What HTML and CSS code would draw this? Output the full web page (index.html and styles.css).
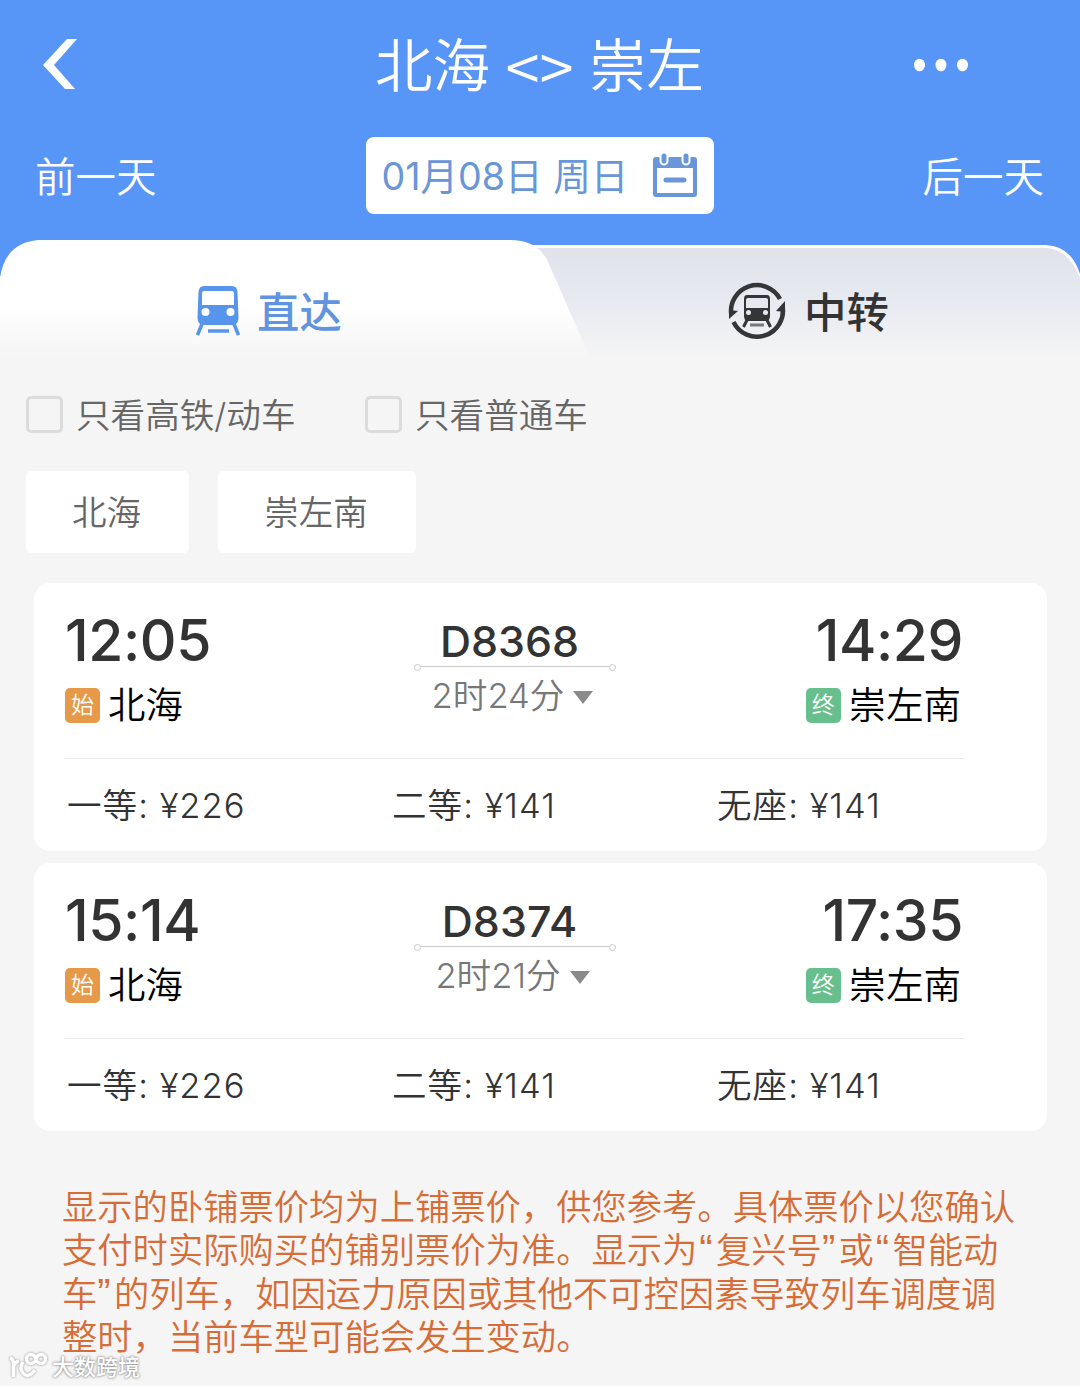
FILE: index.html
```html
<!DOCTYPE html>
<html lang="zh-CN">
<head>
    <meta charset="UTF-8">
    <meta name="viewport" content="width=device-width, initial-scale=1.0">
    <title>北海 - 崇左 车票查询</title>
    <link rel="stylesheet" href="styles.css">
</head>
<body>
    <header class="header">
        <div class="title-bar">
            <svg class="back-icon" viewBox="0 0 34 52"><path d="M24 0H34L11 26L32 50H22L0 26Z" fill="#fff"/></svg>
            <h1><span>北海</span><span class="arrows">&lt;&gt;</span><span>崇左</span></h1>
            <svg class="more-icon" viewBox="0 0 54 14" fill="#fff"><ellipse cx="5.500" cy="7" rx="5.500" ry="6.300"/><ellipse cx="27" cy="7" rx="5.500" ry="6.300"/><ellipse cx="48.500" cy="7" rx="5.500" ry="6.300"/></svg>
        </div>
        <div class="date-bar">
            <span class="day-link">前一天</span>
            <div class="date-picker">
                <span class="date-text">01月08日 周日</span>
                <svg class="calendar-icon" viewBox="0 0 44 46">
                    <path d="M3 4H41Q44 4 44 7V41Q44 44 41 44H3Q0 44 0 41V7Q0 4 3 4Z" fill="#6896d8"/>
                    <path d="M4 15H40V40H4Z" fill="#fff"/>
                    <g stroke="#fff" stroke-width="9" stroke-linecap="round"><path d="M11 3V8M33 3V8"/></g>
                    <g stroke="#6896d8" stroke-width="5" stroke-linecap="round"><path d="M11 3V8M33 3V8"/><path d="M13 27H31"/></g>
                </svg>
            </div>
            <span class="day-link">后一天</span>
        </div>
    </header>

    <nav class="tabs">
        <svg class="tabs-bg" viewBox="0 0 1080 130">
            <defs>
                <linearGradient id="activeFade" x1="0" y1="0" x2="0" y2="1">
                    <stop offset="0.5" stop-color="#fff"/>
                    <stop offset="0.9" stop-color="#f5f5f5"/>
                </linearGradient>
                <linearGradient id="idleFade" x1="0" y1="0" x2="0" y2="1">
                    <stop offset="0" stop-color="#e0e3ea"/>
                    <stop offset="0.45" stop-color="#e7eaf1"/>
                    <stop offset="0.9" stop-color="#f5f5f5"/>
                </linearGradient>
            </defs>
            <path d="M0 0H1080V36H0Z" fill="#5795f6"/>
            <path d="M500 5H1046Q1071 6 1080 34V130H500Z" fill="#fff"/>
            <path d="M500 8H1046Q1069 9 1080 38V130H500Z" fill="url(#idleFade)"/>
            <path d="M0 38Q5 3 38 0H510Q538 0 548 22L592 122V130H0Z" fill="url(#activeFade)"/>
        </svg>
        <div class="tab active">
            <svg class="train-icon" viewBox="0 0 44 50">
                <path d="M8 0H36Q41 0 41.500 6L42.500 32Q42 39 37 39H7Q2 39 1.500 32L2.500 6Q3 0 8 0Z" fill="#5795ec"/>
                <path d="M8 5H36Q38 5 38 7V19H6V7Q6 5 8 5Z" fill="#fff"/>
                <circle cx="9.500" cy="26" r="4" fill="#fff"/><circle cx="34.500" cy="26" r="4" fill="#fff"/>
                <path d="M6 38L1.500 49M38 38L42.500 49M12 45H33" stroke="#5795ec" stroke-width="3.500"/>
            </svg>
            <span>直达</span>
        </div>
        <div class="tab">
            <svg class="transfer-icon" viewBox="0 0 58 58">
                <g fill="none" stroke="#333537" stroke-width="4.500"><path d="M2.300 33A26 26 0 0 1 51 17M4.500 40A26 26 0 0 0 53.500 24"/></g>
                <path d="M0 37V28L9 29ZM56 19V30L47 29Z" fill="#333537"/>
                <path d="M18 13H38Q41 13 41 17V34Q41 39 37 39H19Q15 39 15 34V17Q15 13 18 13Z" fill="#333537"/>
                <path d="M19 16H37Q39 16 39 18V26H17V18Q17 16 19 16Z" fill="#e5e8ee"/>
                <circle cx="19.500" cy="30.500" r="2.500" fill="#e5e8ee"/><circle cx="36.500" cy="30.500" r="2.500" fill="#e5e8ee"/>
                <path d="M18 38L14.500 45M38 38L41.500 45" stroke="#333537" stroke-width="3"/><path d="M21 43H35" stroke="#777" stroke-width="3"/>
            </svg>
            <span>中转</span>
        </div>
    </nav>

    <main>
        <div class="filters">
            <label class="filter"><span class="checkbox"></span><span class="filter-text">只看高铁/动车</span></label>
            <label class="filter"><span class="checkbox"></span><span class="filter-text">只看普通车</span></label>
        </div>
        <div class="chips">
            <div class="chip">北海</div>
            <div class="chip">崇左南</div>
        </div>

        <div class="train-list">
            <section class="card">
                <div class="route">
                    <div class="stop">
                        <div class="time">12:05</div>
                        <div class="station"><span class="badge start">始</span>北海</div>
                    </div>
                    <div class="train">
                        <div class="train-no">D8368</div>
                        <div class="line"></div>
                        <div class="duration">2时24分<i class="caret"></i></div>
                    </div>
                    <div class="stop arrive">
                        <div class="time">14:29</div>
                        <div class="station"><span class="badge end">终</span>崇左南</div>
                    </div>
                </div>
                <div class="prices">
                    <span>一等: ¥226</span>
                    <span>二等: ¥141</span>
                    <span>无座: ¥141</span>
                </div>
            </section>
            <section class="card">
                <div class="route">
                    <div class="stop">
                        <div class="time">15:14</div>
                        <div class="station"><span class="badge start">始</span>北海</div>
                    </div>
                    <div class="train">
                        <div class="train-no">D8374</div>
                        <div class="line"></div>
                        <div class="duration">2时21分<i class="caret"></i></div>
                    </div>
                    <div class="stop arrive">
                        <div class="time">17:35</div>
                        <div class="station"><span class="badge end">终</span>崇左南</div>
                    </div>
                </div>
                <div class="prices">
                    <span>一等: ¥226</span>
                    <span>二等: ¥141</span>
                    <span>无座: ¥141</span>
                </div>
            </section>
        </div>

        <p class="notice">显示的卧铺票价均为上铺票价，供您参考。具体票价以您确认<br>支付时实际购买的铺别票价为准。显示为<q>复兴号</q>或<q>智能动<br>车</q>的列车，如因运力原因或其他不可控因素导致列车调度调<br>整时，当前车型可能会发生变动。</p>
    </main>

    <div class="watermark">
        <svg viewBox="0 0 40 28" fill="none" stroke="#fff" stroke-width="3.500">
            <path d="M1 5Q4.500 6 4.500 11V24M4.500 15Q5 9 10 8M14 9Q10 15 14 20Q19 26 26 17"/>
            <circle cx="22" cy="6" r="4.500"/><circle cx="32" cy="6" r="4.500"/>
        </svg>
        <span>大数跨境</span>
    </div>
</body>
</html>
```
FILE: styles.css
```css
* {
    box-sizing: border-box;
}
body {
    margin: 0;
    width: 1080px;
    height: 1386px;
    position: relative;
    overflow: hidden;
    background: #f5f5f5;
    color: #333;
    font-family: Inter, "Noto Sans CJK SC", sans-serif;
    font-size: 34.6px;
    font-weight: 350;
    white-space: nowrap;
}
svg {
    display: block;
    flex: none;
}

/* header */
.header {
    height: 240px;
    background: #5795f6;
    color: #fff;
}
.title-bar {
    height: 130px;
    padding: 0 112px 0 43px;
    display: grid;
    grid-template-columns: 290px auto 1fr;
    align-items: center;
}
.back-icon {
    width: 34px;
    height: 52px;
}
h1 {
    margin: 2px 0 0 42px;
    display: flex;
    gap: 14px;
    font-size: 57.5px;
    font-weight: 350;
    line-height: 80px;
}
.arrows {
    width: 71px;
    font-family: "Noto Sans CJK SC", sans-serif;
    font-size: 62px;
    font-weight: 350;
    line-height: 76px;
    text-align: center;
}
.more-icon {
    width: 54px;
    height: 14px;
    justify-self: end;
}
.date-bar {
    padding: 7px 36px 0 35px;
    display: flex;
    align-items: center;
    justify-content: space-between;
}
.day-link {
    padding-top: 4px;
    font-size: 40.5px;
    line-height: 73px;
}
.date-picker {
    width: 348px;
    height: 77px;
    padding: 0 17px 0 16px;
    display: flex;
    align-items: center;
    justify-content: space-between;
    background: #fff;
    border-radius: 8px;
    color: #6896d8;
}
.date-text {
    padding-bottom: 5px;
    font-size: 37.6px;
    font-weight: 400;
}
.calendar-icon {
    width: 44px;
    height: 46px;
}

/* tabs */
.tabs {
    position: relative;
    height: 130px;
    display: grid;
    grid-template-columns: 1fr 1fr;
}
.tabs-bg {
    position: absolute;
    inset: 0;
    width: 1080px;
    height: 130px;
}
.tab {
    position: relative;
    height: 142px;
    padding-right: 2px;
    display: flex;
    align-items: center;
    justify-content: center;
    gap: 17px;
    font-size: 42.4px;
    font-weight: 500;
}
.tab span {
    padding-bottom: 4px;
}
.tab.active {
    color: #6093e0;
}
.train-icon {
    width: 44px;
    height: 50px;
}
.transfer-icon {
    width: 58px;
    height: 58px;
    overflow: visible;
}

/* filters */
.filters {
    height: 88px;
    padding-left: 26px;
    display: grid;
    grid-template-columns: 339px 1fr;
    align-items: center;
    color: #666;
}
.filter {
    display: flex;
    align-items: center;
    gap: 13px;
}
.filter-text {
    padding-bottom: 2px;
}
.checkbox {
    width: 37px;
    height: 37px;
    border: 3px solid #dcdcdc;
    border-radius: 5px;
}
.chips {
    margin-top: 13px;
    padding-left: 26px;
    display: flex;
    gap: 29px;
}
.chip {
    height: 82px;
    padding: 0 48px 0 46px;
    background: #fff;
    border-radius: 5px;
    line-height: 83px;
    color: #666;
}

/* cards */
.train-list {
    margin: 30px 33px 0 34px;
    display: grid;
    gap: 12px;
}
.card {
    height: 268px;
    padding: 27px 83px 0 31px;
    background: #fff;
    border-radius: 16px;
}
.route {
    height: 149px;
    display: grid;
    grid-template-columns: 1fr 202px 1fr;
    border-bottom: 1px solid #ececec;
}
.time {
    font-size: 57px;
    font-weight: 500;
    line-height: 62px;
    letter-spacing: -0.4px;
}
.station {
    margin-top: 5px;
    display: flex;
    align-items: center;
    gap: 8px;
    font-size: 37.4px;
    line-height: 58px;
    color: #000;
}
.badge {
    width: 35px;
    height: 35px;
    margin-top: -2px;
    border-radius: 5px;
    color: #fff;
    font-size: 23px;
    line-height: 34px;
    text-align: center;
}
.badge.start {
    background: #e69a49;
}
.badge.end {
    background: #66bf8c;
}
.arrive {
    display: flex;
    flex-direction: column;
    align-items: flex-end;
}
.arrive .time {
    padding-right: 1px;
}
.arrive .station {
    padding-right: 3px;
}
.train {
    padding-top: 7px;
    text-align: center;
}
.train-no {
    padding-right: 10px;
    font-size: 43px;
    font-weight: 500;
    line-height: 49px;
}
.line {
    height: 1px;
    background: #ccc;
    position: relative;
}
.line::before,
.line::after {
    content: "";
    position: absolute;
    top: -2px;
    width: 5px;
    height: 5px;
    border: 1px solid #ccc;
    border-radius: 50%;
    background: #fff;
}
.line::before {
    left: 0;
}
.line::after {
    right: 0;
}
.duration {
    padding-right: 4px;
    display: flex;
    align-items: center;
    justify-content: center;
    gap: 9px;
    line-height: 56px;
    color: #777;
}
.caret {
    margin-top: 4px;
    border: 10px solid transparent;
    border-top: 13px solid #8a8a8a;
    border-bottom: 0;
}
.prices {
    height: 88px;
    padding-left: 2px;
    display: grid;
    grid-template-columns: 325px 325px 1fr;
    align-items: center;
    letter-spacing: 1px;
}

/* notice */
.notice {
    margin: 55px 0 0 62px;
    font-size: 35.3px;
    line-height: 43.3px;
    color: #d66d37;
}
.notice q {
    quotes: "“" "”";
}
.notice q::before,
.notice q::after {
    font-family: "Liberation Sans", sans-serif;
    font-size: 40px;
    line-height: 0;
    letter-spacing: 3.3px;
}
.notice q::before {
    margin-left: 2px;
}

.watermark {
    position: absolute;
    left: 9px;
    bottom: 5px;
    display: flex;
    align-items: center;
    gap: 3px;
    color: #fff;
    font-size: 22px;
    font-weight: 500;
    line-height: 24px;
    text-shadow: 0 0 2px #888, 0 0 3px #999;
}
.watermark svg {
    width: 40px;
    height: 28px;
    overflow: visible;
    filter: drop-shadow(0 0 1px #888);
}
```
